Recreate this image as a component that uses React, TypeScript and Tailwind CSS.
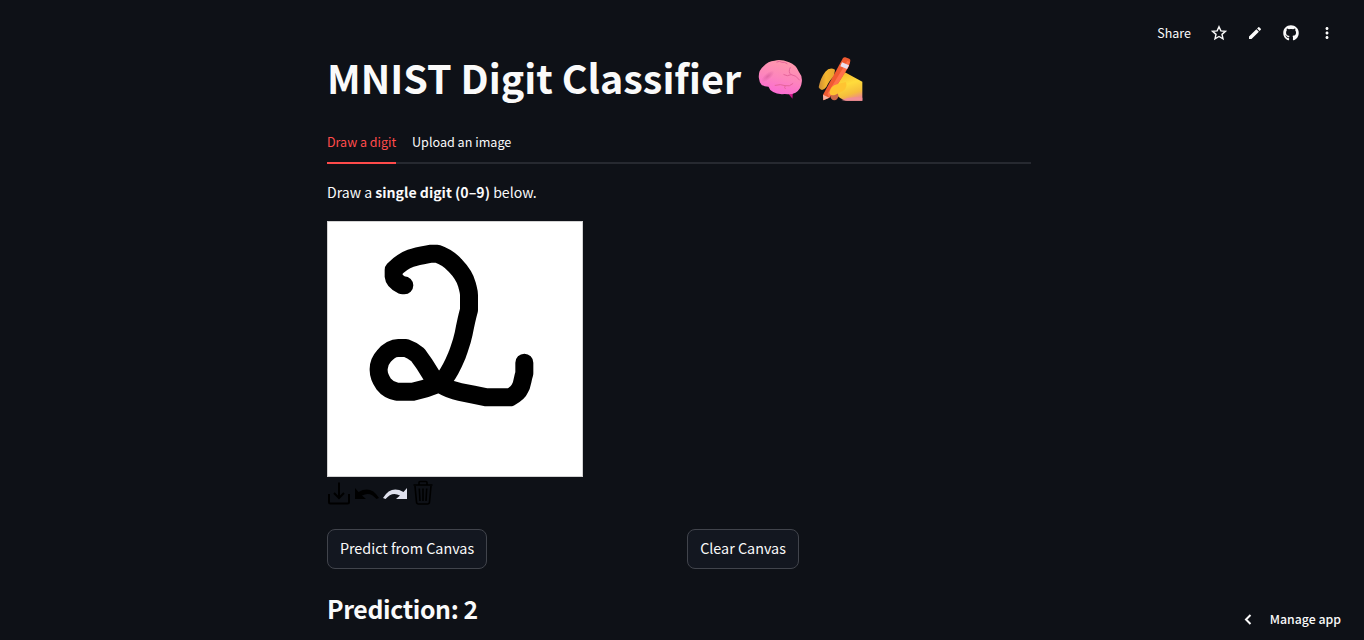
import type { ReactNode } from "react";
import { MdEdit, MdMoreVert } from "react-icons/md";
import { FaGithub } from "react-icons/fa";

function Star() {
  return (
    <svg viewBox="0 0 24 24" className="h-[18px] w-[18px] fill-none stroke-current stroke-[1.9]" aria-hidden="true">
      <path d="M12 3.6 L14.500 9.200 L20.600 9.750 L16 13.800 L17.350 19.800 L12 16.650 L6.650 19.800 L8 13.800 L3.400 9.750 L9.500 9.200Z" />
    </svg>
  );
}

function ChevronLeft() {
  return (
    <svg viewBox="0 0 20 20" className="mr-[12px] h-5 w-5 fill-none stroke-current stroke-2" aria-hidden="true">
      <path d="M12.500 6 L8 10.500 L12.500 15" />
    </svg>
  );
}

function Brain() {
  return (
    <svg role="img" aria-label="brain" viewBox="0 0 140 120" className="h-[40px] w-[47px] shrink-0">
      <defs>
        <linearGradient id="brainFill" x1="0.6" y1="0" x2="0.3" y2="1">
          <stop offset="0" stopColor="#ff9aab" />
          <stop offset="0.5" stopColor="#fd86bc" />
          <stop offset="1" stopColor="#fb68d6" />
        </linearGradient>
        <radialGradient id="brainShade">
          <stop offset="0" stopColor="#cf5795" stopOpacity=".6" />
          <stop offset="1" stopColor="#cf5795" stopOpacity="0" />
        </radialGradient>
      </defs>
      <path d="M90 100 L106 119 L107 98Z" fill="#cb1688" />
      <path
        d="M5 56 Q3 35 19 22 Q33 6 52 5 Q70 -1 96 10 Q116 17 125 38 Q136 51 134 68 Q132 91 115 101 Q103 107 83 105 Q60 107 48 99 Q37 93 34 83 Q13 83 8 70Z"
        fill="url(#brainFill)"
      />
      <ellipse cx="32" cy="52" rx="24" ry="10" transform="rotate(-40 32 52)" fill="url(#brainShade)" />
      <path
        d="M59 9 Q67 4 74 10 Q83 8 90 14 M99 26 Q92 40 102 47 Q117 48 127 63 M102 47 Q90 54 80 47 M54 79 Q70 74 84 80 Q97 84 107 74 M84 80 Q80 86 84 89"
        fill="none"
        stroke="#e5659b"
        strokeWidth="3"
        strokeLinecap="round"
      />
    </svg>
  );
}

function WritingHand() {
  return (
    <svg role="img" aria-label="writing hand" viewBox="0 0 138 132" className="h-[44px] w-[46px] shrink-0">
      <defs>
        <linearGradient id="handFill" x1="0.2" y1="0" x2="0.5" y2="1">
          <stop offset="0" stopColor="#f5b52c" />
          <stop offset="0.45" stopColor="#ffdc3c" />
          <stop offset="0.8" stopColor="#f5be3c" />
          <stop offset="1" stopColor="#ef8d88" />
        </linearGradient>
        <linearGradient id="fingerFill">
          <stop offset="0" stopColor="#c98a35" />
          <stop offset="0.45" stopColor="#f5b72f" />
          <stop offset="1" stopColor="#e9a52f" />
        </linearGradient>
      </defs>
      <path d="M74 46 Q82 43 92 50 L136 74 V131 H90 Q70 128 57 111 L57 67Z" fill="url(#handFill)" />
      <ellipse cx="52" cy="116" rx="12" ry="14" fill="#c96a49" />
      <path d="M5 91 Q10 63 25 44 Q38 29 54 38 L51 58 Q39 68 28 90 Q14 108 5 91Z" fill="url(#fingerFill)" />
      <path d="M78 3 Q81 0 85 1 L97 5 Q101 7 100 12 L95 29 L37 122 L19 130 L18 113Z" fill="#f05a31" />
      <path d="M91 12 L99 15 L94 29 L37 122 L31 110Z" fill="#ff704a" />
      <path d="M75 16 L96 25 L90 36 L70 28Z" fill="#e9dff0" />
      <path d="M18 113 L37 122 L19 130Z" fill="#f8b3a2" />
      <path d="M37 107 Q41 86 60 82 L86 75 Q94 89 79 101 L54 114 Q40 118 37 107Z" fill="#ffc431" />
      <path d="M73 129 Q99 117 136 122 V131H85Z" fill="#f08e96" />
    </svg>
  );
}

function CanvasTools() {
  return (
    <div className="flex h-[30px] w-[112px] items-center">
      <svg viewBox="0 0 112 30" className="h-[30px] w-[112px]" aria-label="Canvas tools">
        <g fill="none" stroke="#000000" strokeWidth="2">
          <path d="M2 17 V25 Q2 26.5 3.5 26.5 H20.5 Q22 26.5 22 25 V17 M12 5.5 V21 M7 16 L12 21 L17 16" />
          <path d="M86.5 8 H105.5 M92 7.5 V5.5 Q92 4.5 93 4.5 H99 Q100 4.5 100 5.5 V7.5 M88 9 L89.5 25 Q89.7 27 91.5 27 H100.5 Q102.3 27 102.5 25 L104 9 M92.3 11.5 L93 24 M96 11.5 V24 M99.7 11.5 L99 24" strokeWidth="1.6" />
        </g>
        <path d="M28 11 V22 H39 L35 18.5 Q43 14 49.5 22 L52 21 Q44 8 31.5 15Z" fill="#000000" />
        <path d="M80 11 V22 H69 L73 18.5 Q65 14 58.5 22 L56 21 Q64 8 76.5 15Z" fill="#dfe1ed" />
      </svg>
    </div>
  );
}

function Digit() {
  return (
    <svg viewBox="24 21 762 762" className="h-[256px] w-[256px] border border-[#d3d3d3] bg-white">
      <path
        d="M253 211 L247 211 C236 206 222 196 221 184 V165 C235 150 255 136 272 130 C295 122 320 119 335 116 H352 C372 123 393 137 405 151 C428 175 436 190 441 209 C444 222 447 230 447 240 V285 C440 310 435 335 431 356 C425 385 419 397 411 421 C401 445 390 470 374 490 Q365 503 350 508 C326 518 310 524 280 530 H230 C208 526 198 516 191 507 C182 494 176 478 176 466 C175 448 181 435 192 423 C204 408 222 397 239 399 H258 C276 405 284 412 294 420 C304 435 309 441 315 450 L336 484 C340 493 352 502 364 509 C384 521 402 527 420 531 L460 539 L500 547 H570 C584 540 595 532 600 520 C608 507 606 496 613 475 V443"
        fill="none"
        stroke="#000000"
        strokeWidth="54"
        strokeLinecap="round"
        strokeLinejoin="round"
      />
    </svg>
  );
}

function CanvasButton({ children, className }: { children: ReactNode; className: string }) {
  return (
    <button className={`flex h-10 items-center justify-center whitespace-nowrap rounded-lg border border-[#41444c] bg-[#131720] pb-0.5 text-[14.35px] font-normal ${className}`}>
      {children}
    </button>
  );
}

export default function App() {
  return (
    <div className="relative h-[640px] w-full overflow-hidden bg-[#0e1117] font-['Noto_Sans_CJK_SC','Noto_Sans',sans-serif] text-[#fafafa]">
      <header className="absolute top-[17px] right-[28px] flex h-8 items-center">
        <button className="mr-[19px] text-[12.5px] leading-8">Share</button>
        <div className="flex items-center gap-[18px]">
          <Star />
          <MdEdit size={16} className="mx-px" />
          <FaGithub size={16} className="mx-px" />
          <MdMoreVert size={18} />
        </div>
      </header>

      <main className="ml-[327px] flex w-[704px] flex-col pt-[52px]">
        <h1 className="flex h-[53px] items-center whitespace-nowrap text-[39.45px] font-bold leading-[53px]">
          <span className="w-[430px] shrink-0 pb-1">MNIST Digit Classifier</span>
          <Brain />
          <span className="w-[13px]" />
          <WritingHand />
        </h1>

        <nav className="mt-[18px] flex h-[41px] gap-4 border-b-2 border-[#262930] text-[12.5px] leading-[38px]">
          <button className="flex h-[41px] w-[69px] whitespace-nowrap border-b-2 border-[#ff4b4b] text-[#ff4b4b]">Draw a digit</button>
          <button className="flex h-[39px] text-[12.6px]">Upload an image</button>
        </nav>

        <p className="mt-4 h-6 text-[14.1px] leading-6">
          Draw a <strong className="font-bold">single digit (0–9)</strong> below.
        </p>
        <div className="mt-[17px] h-[256px]"><Digit /></div>
        <CanvasTools />

        <div className="mt-[22px] grid grid-cols-2 gap-4">
          <CanvasButton className="w-[160px]">Predict from Canvas</CanvasButton>
          <CanvasButton className="w-[112px]">Clear Canvas</CanvasButton>
        </div>
        <h2 className="mt-[21px] h-9 text-[24.8px] font-bold leading-9 tracking-[-0.35px]">Prediction: 2</h2>
      </main>

      <button className="absolute right-[23px] bottom-[5px] flex h-8 items-center text-[12.3px] font-medium">
        <ChevronLeft />
        Manage app
      </button>
    </div>
  );
}
